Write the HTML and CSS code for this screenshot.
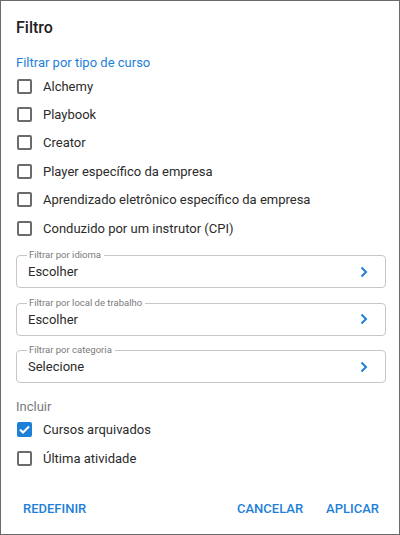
FILE: index.html
```html
<!DOCTYPE html>
<html lang="pt">
<head>
    <meta charset="UTF-8">
    <meta name="viewport" content="width=device-width, initial-scale=1.0">
    <title>Filtro</title>
    <link rel="stylesheet" href="styles.css">
</head>
<body>
    <div class="dialog">
        <h1 class="title">Filtro</h1>

        <div class="section-label">Filtrar por tipo de curso</div>
        <div class="check-list">
            <label class="check-row"><span class="box"></span>Alchemy</label>
            <label class="check-row"><span class="box"></span>Playbook</label>
            <label class="check-row"><span class="box"></span>Creator</label>
            <label class="check-row"><span class="box"></span>Player específico da empresa</label>
            <label class="check-row"><span class="box"></span>Aprendizado eletrônico específico da empresa</label>
            <label class="check-row"><span class="box"></span>Conduzido por um instrutor (CPI)</label>
        </div>

        <div class="fields">
            <div class="field">
                <span class="field-label">Filtrar por idioma</span>
                <span class="field-value">Escolher</span>
                <svg class="chevron" width="8" height="12" viewBox="0 0 8 12"><polyline points="1.5,1.5 6,6 1.5,10.5" /></svg>
            </div>
            <div class="field">
                <span class="field-label">Filtrar por local de trabalho</span>
                <span class="field-value">Escolher</span>
                <svg class="chevron" width="8" height="12" viewBox="0 0 8 12"><polyline points="1.5,1.5 6,6 1.5,10.5" /></svg>
            </div>
            <div class="field">
                <span class="field-label">Filtrar por categoria</span>
                <span class="field-value">Selecione</span>
                <svg class="chevron" width="8" height="12" viewBox="0 0 8 12"><polyline points="1.5,1.5 6,6 1.5,10.5" /></svg>
            </div>
        </div>

        <div class="include-label">Incluir</div>
        <div class="include-list">
            <label class="check-row"><span class="box checked"><svg width="11" height="9" viewBox="0 0 11 9"><polyline points="1,4.5 4,7.5 10,1.5" /></svg></span>Cursos arquivados</label>
            <label class="check-row"><span class="box"></span>Última atividade</label>
        </div>

        <div class="footer">
            <button class="text-btn">Redefinir</button>
            <div class="footer-right">
                <button class="text-btn">Cancelar</button>
                <button class="text-btn">Aplicar</button>
            </div>
        </div>
    </div>
</body>
</html>
```

FILE: styles.css
```css
body {
    margin: 0;
    font-family: Roboto, "Liberation Sans", Arial, sans-serif;
    color: #212121;
    background: #fff;
}
.dialog {
    width: 400px;
    height: 535px;
    box-sizing: border-box;
    border: 1px solid #6a6a6a;
    padding: 0 13px 8px 15px;
    display: flex;
    flex-direction: column;
}
.title {
    margin: 17px 0 0;
    font-size: 16px;
    font-weight: 500;
    line-height: 20px;
}
.section-label {
    margin-top: 17px;
    font-size: 13px;
    line-height: 16px;
    color: #1e7fd9;
}
.check-list {
    margin-top: 1px;
}
.check-row {
    display: flex;
    align-items: center;
    height: 28.4px;
    font-size: 13px;
    color: #2b2b2b;
}
.include-list .check-row {
    height: 29px;
}
.box {
    width: 15px;
    height: 15px;
    box-sizing: border-box;
    border: 2px solid #6b6b6b;
    border-radius: 2px;
    margin: 0 11px 0 1px;
    display: flex;
    align-items: center;
    justify-content: center;
    flex-shrink: 0;
}
.box.checked {
    background: #1e7fd9;
    border-color: #1e7fd9;
}
.box.checked polyline {
    fill: none;
    stroke: #fff;
    stroke-width: 2;
}
.fields {
    margin-top: 13px;
    display: flex;
    flex-direction: column;
    gap: 14.5px;
}
.field {
    position: relative;
    height: 33px;
    box-sizing: border-box;
    border: 1px solid #c6c6c6;
    border-radius: 4px;
    padding: 0 17px 0 11px;
    display: flex;
    align-items: center;
    justify-content: space-between;
}
.field-label {
    position: absolute;
    top: -7px;
    left: 10px;
    padding: 0 3px 0 2px;
    background: #fff;
    font-size: 9.5px;
    line-height: 12px;
    color: #7a7a7a;
}
.field-value {
    font-size: 13px;
    color: #2b2b2b;
}
.chevron polyline {
    fill: none;
    stroke: #1e7fd9;
    stroke-width: 2;
}
.include-label {
    margin-top: 16px;
    font-size: 13px;
    line-height: 16px;
    color: #7a7a7a;
}
.footer {
    margin-top: auto;
    display: flex;
    justify-content: space-between;
}
.footer-right {
    display: flex;
    gap: 9px;
}
.text-btn {
    border: none;
    background: none;
    padding: 0 7px;
    height: 36px;
    font-family: inherit;
    font-size: 13px;
    font-weight: 500;
    text-transform: uppercase;
    color: #1e7fd9;
    cursor: pointer;
}
```
